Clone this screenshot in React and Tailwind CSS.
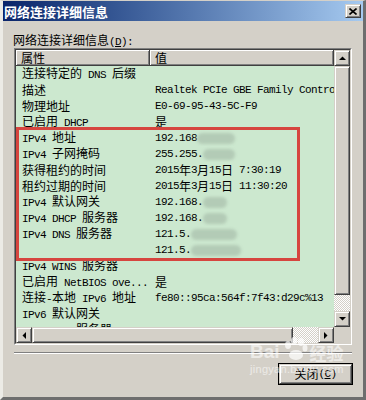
import React from 'react';

const rows = [
  ['连接特定的 DNS 后缀', ''],
  ['描述', 'Realtek PCIe GBE Family Contro'],
  ['物理地址', 'E0-69-95-43-5C-F9'],
  ['已启用 DHCP', '是'],
  ['IPv4 地址', '192.168', 38],
  ['IPv4 子网掩码', '255.255.', 32],
  ['获得租约的时间', '2015年3月15日 7:30:19'],
  ['租约过期的时间', '2015年3月15日 11:30:20'],
  ['IPv4 默认网关', '192.168.', 24],
  ['IPv4 DHCP 服务器', '192.168.', 24],
  ['IPv4 DNS 服务器', '121.5.', 46],
  ['', '121.5.', 50],
  ['IPv4 WINS 服务器', ''],
  ['已启用 NetBIOS ove...', '是'],
  ['连接-本地 IPv6 地址', 'fe80::95ca:564f:7f43:d29c%13'],
  ['IPv6 默认网关', ''],
  ['IPv6 DNS 服务器', ''],
];

// ascii runs get a half-width mono face, like SimSun
function Txt({ s }) {
  const parts = s.split(/([\x20-\x7E]+)/).filter(Boolean);
  return parts.map((p, i) =>
    /^[\x20-\x7E]+$/.test(p) ? (
      <span key={i} className="font-['Liberation_Mono',monospace] text-[11px] tracking-[-0.6px] whitespace-pre">{p}</span>
    ) : (
      <span key={i}>{p}</span>
    )
  );
}

const raised =
  'bg-[#d4d0c8] border border-t-[#d4d0c8] border-l-[#d4d0c8] border-r-[#404040] border-b-[#404040] shadow-[inset_1px_1px_#fff,inset_-1px_-1px_#808080]';
const checker = 'bg-[repeating-conic-gradient(#d4d0c8_0_25%,#ffffff_0_50%)] bg-[length:2px_2px]';

function Arrow({ dir }) {
  const pts = {
    up: '0,4 7,4 3.5,0.5',
    down: '0,0 7,0 3.5,3.5',
    left: '4,0 4,7 0.5,3.5',
    right: '0,0 0,7 3.5,3.5',
  }[dir];
  const vert = dir === 'up' || dir === 'down';
  return (
    <svg width={vert ? 7 : 4} height={vert ? 4 : 7} viewBox={vert ? '0 0 7 4' : '0 0 4 7'}>
      <polygon points={pts} fill="#000" />
    </svg>
  );
}

function ScrollBtn({ dir }) {
  return (
    <div className={`w-4 h-4 shrink-0 flex items-center justify-center ${raised}`}>
      <Arrow dir={dir} />
    </div>
  );
}

export default function App() {
  return (
    <div className="relative w-[366px] h-[400px] flex flex-col bg-[#d4d0c8] border-t border-l-[3px] border-r-[3px] border-b-[3px] border-t-[#d4d0c8] border-l-[#ecebe6] border-r-[#6e6e6e] border-b-[#6e6e6e] font-['Noto_Sans_CJK_SC',sans-serif] text-[12px] text-black overflow-hidden">
      {/* title bar */}
      <div className="h-[20px] shrink-0 flex items-center justify-between bg-gradient-to-r from-[#0a246a] to-[#a6caf0] pl-[1px] pr-[2px]">
        <span className="text-white font-bold text-[13px] leading-none">网络连接详细信息</span>
        <div className={`w-4 h-[14px] flex items-center justify-center ${raised}`}>
          <svg width="8" height="7" viewBox="0 0 8 7">
            <path d="M0.5 0.5 L7.5 6.5 M7.5 0.5 L0.5 6.5" stroke="#000" strokeWidth="1.6" />
          </svg>
        </div>
      </div>

      <div className="flex-1 flex flex-col pl-[10px] pr-[10px]">
        <div className="mt-[12px] h-[14px] leading-[14px] whitespace-nowrap">
          网络连接详细信息<Txt s="(" /><span className="underline font-['Liberation_Mono',monospace] text-[11px] tracking-[-0.6px]">D</span><Txt s="):" />
        </div>

        {/* list box */}
        <div className="mt-[1px] ml-[1px] w-[338px] h-[297px] border border-t-[#808080] border-l-[#808080] border-r-white border-b-white">
          <div className="w-full h-full flex flex-col border border-t-[#404040] border-l-[#404040] border-r-[#d4d0c8] border-b-[#d4d0c8] bg-[#cce8cf]">
            <div className="flex-1 flex min-h-0">
              <div className="relative flex-1 flex flex-col min-w-0 overflow-hidden">
                <div className="h-4 shrink-0 flex">
                  <div className="w-[134px] pl-[5px] flex items-center leading-[15px] bg-[#d4d0c8] border-r border-b border-[#404040] shadow-[inset_1px_1px_#fff,inset_-1px_-1px_#808080]">属性</div>
                  <div className="flex-1 pl-[5px] flex items-center leading-[15px] bg-[#d4d0c8] border-r border-b border-[#404040] shadow-[inset_1px_1px_#fff,inset_-1px_-1px_#808080]">值</div>
                </div>
                {rows.map(([k, v, blur], i) => (
                  <div key={i} className="h-4 shrink-0 flex items-center whitespace-nowrap">
                    <div className="w-[134px] pl-[6px] overflow-hidden">
                      <Txt s={k} />
                    </div>
                    <div className="flex-1 pl-[5px] overflow-hidden flex items-center">
                      <Txt s={v} />
                      {blur && (
                        <span
                          className="inline-block h-[11px] rounded-full bg-[#b3cbb6] blur-[1.5px]"
                          style={{ width: blur }}
                        />
                      )}
                    </div>
                  </div>
                ))}
                {/* annotation box */}
                <div className="absolute left-0 top-[77px] w-[284px] h-[134px] border-[3px] border-[#d6453f] pointer-events-none" />
              </div>
              <div className="w-4 shrink-0 flex flex-col">
                <ScrollBtn dir="up" />
                <div className={`h-[229px] shrink-0 ${raised}`} />
                <div className={`flex-1 ${checker}`} />
                <ScrollBtn dir="down" />
              </div>
            </div>
            <div className="h-4 shrink-0 flex">
              <ScrollBtn dir="left" />
              <div className={`w-[261px] shrink-0 ${raised}`} />
              <div className={`flex-1 ${checker}`} />
              <ScrollBtn dir="right" />
              <div className="w-4 shrink-0 bg-[#d4d0c8]" />
            </div>
          </div>
        </div>

        <div className="mt-[7px] ml-[1px] w-[338px] border-t border-b border-t-[#808080] border-b-white" />

        <div className="mt-[9px] self-end mr-0 w-[75px] h-[22px] border border-black">
          <div className={`w-full h-full flex items-center justify-center leading-none whitespace-nowrap ${raised}`}>
            关闭<Txt s="(" /><span className="underline font-['Liberation_Mono',monospace] text-[11px] tracking-[-0.6px]">C</span><Txt s=")" />
          </div>
        </div>
      </div>

      {/* watermark */}
      <div className="absolute left-[247px] top-[336px] pointer-events-none text-white/55">
        <div className="flex items-end gap-[2px]">
          <span className="font-['Liberation_Sans',sans-serif] font-bold text-[19px] leading-none">Bai</span>
          <svg width="26" height="24" viewBox="0 0 26 24" className="opacity-70">
            <ellipse cx="6" cy="8" rx="3" ry="4" fill="#fff" />
            <ellipse cx="12" cy="4" rx="3" ry="4" fill="#fff" />
            <ellipse cx="19" cy="5" rx="3" ry="4" fill="#fff" />
            <ellipse cx="23" cy="11" rx="2.5" ry="3.5" fill="#fff" />
            <ellipse cx="14" cy="18" rx="7" ry="5" fill="#fff" />
          </svg>
          <span className="font-bold text-[17px] leading-none">经验</span>
        </div>
        <div className="font-['Liberation_Sans',sans-serif] text-[11px] leading-none mt-[3px] tracking-[0.3px]">jingyan.baidu.com</div>
      </div>
    </div>
  );
}
